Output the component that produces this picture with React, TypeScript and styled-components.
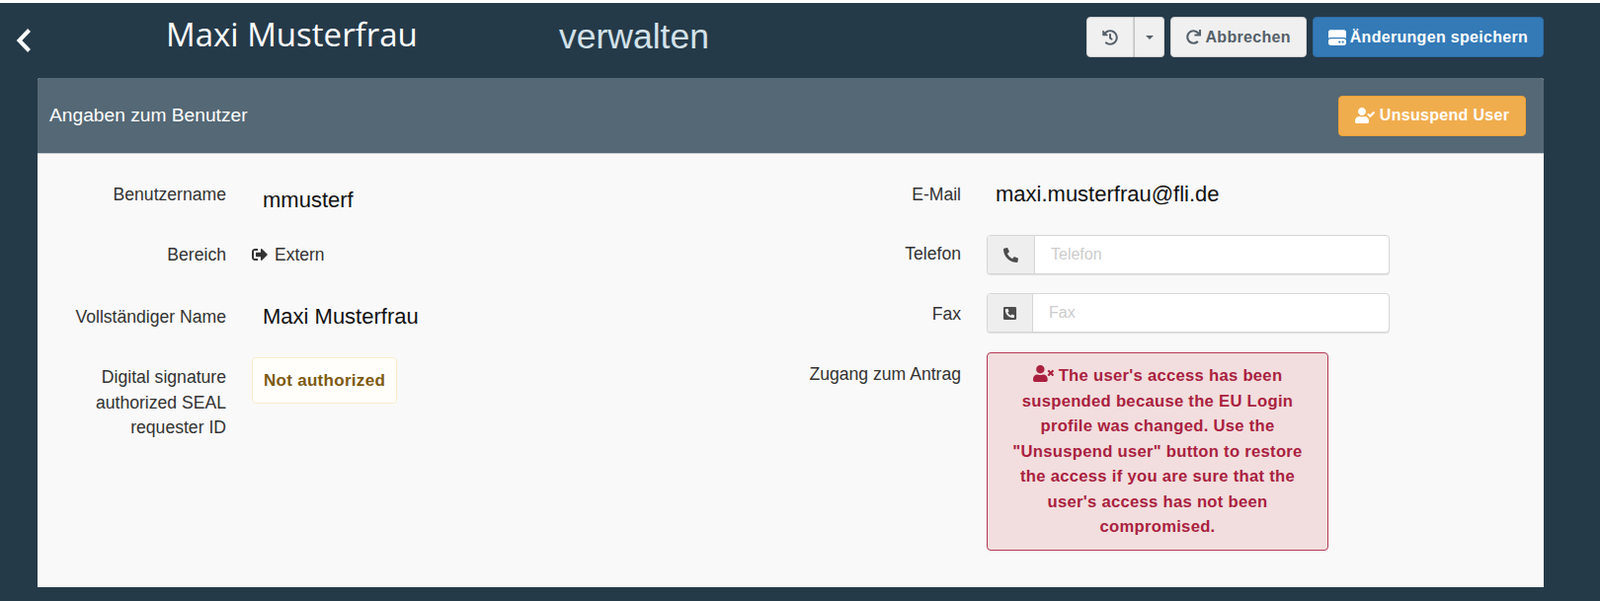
import React from "react"
import styled, { createGlobalStyle } from "styled-components"
import {
  FaHistory,
  FaPhoneAlt,
  FaPhoneSquareAlt,
  FaRedo,
  FaSignOutAlt,
  FaUserCheck,
  FaUserTimes,
} from "react-icons/fa"
import { FaHardDrive } from "react-icons/fa6"

const GlobalStyle = createGlobalStyle`
  html, body {
    margin: 0;
    background: #253a49;
    font-family: "Liberation Sans", Arial, sans-serif;
  }
`

const Page = styled.div`
  width: 1620px;
  height: 609px;
  overflow: hidden;
  border-top: 3px solid #ffffff;
  box-sizing: border-box;
  background: #253a49;
`

const TopBar = styled.div`
  height: 76px;
  display: flex;
  align-items: flex-start;
  padding-right: 57px;
`

const BackLink = styled.a`
  width: 168px;
  padding: 25px 0 0 16px;
  box-sizing: border-box;
  flex: none;
  line-height: 0;
`

const UserName = styled.h1`
  margin: 11px 0 0;
  width: 398px;
  flex: none;
  font-family: "Open Sans", sans-serif;
  font-size: 33px;
  line-height: 42px;
  font-weight: 400;
  color: #ffffff;
`

const PageTitle = styled.span`
  margin-top: 13px;
  font-size: 35.5px;
  line-height: 42px;
  color: #d3e2ea;
`

const Actions = styled.div`
  margin-left: auto;
  margin-top: 14px;
  display: flex;
  gap: 6px;
`

const Button = styled.button<{ $variant?: "default" | "primary" | "warning" }>`
  height: 41px;
  display: inline-flex;
  align-items: center;
  justify-content: center;
  gap: 4px;
  padding: 0 15px;
  border-radius: 4px;
  font-family: inherit;
  font-size: 16px;
  font-weight: 700;
  letter-spacing: 0.3px;
  white-space: nowrap;
  border: 1px solid
    ${(p) =>
      p.$variant === "primary" ? "#2e6da4" : p.$variant === "warning" ? "#eea236" : "#d4d4d4"};
  background: ${(p) =>
    p.$variant === "primary" ? "#337ab7" : p.$variant === "warning" ? "#f0ad4e" : "#f0f0f0"};
  color: ${(p) => (p.$variant === "primary" || p.$variant === "warning" ? "#ffffff" : "#55606a")};
`

const SplitGroup = styled.div`
  display: flex;
  width: 79px;
`

const SplitMain = styled(Button)`
  width: 48px;
  padding: 0;
  border-radius: 4px 0 0 4px;
`

const SplitCaret = styled(Button)`
  width: 31px;
  padding: 0;
  border-left-color: #c4c4c4;
  border-radius: 0 4px 4px 0;
`

const Caret = styled.span`
  width: 0;
  height: 0;
  border-left: 4px solid transparent;
  border-right: 4px solid transparent;
  border-top: 4px solid #55606a;
`

const Panel = styled.section`
  margin: 0 57px 0 38px;
  height: 516px;
  border-radius: 3px 3px 0 0;
  overflow: hidden;
  background: #f9f9f9;
`

const PanelHeader = styled.header`
  height: 77px;
  box-sizing: border-box;
  display: flex;
  align-items: center;
  justify-content: space-between;
  padding: 0 18px 0 12px;
  background: #546875;
  border-bottom: 1px solid #c9ced2;
`

const PanelTitle = styled.h2`
  margin: 0;
  font-size: 19.2px;
  font-weight: 400;
  color: #ffffff;
`

const UnsuspendButton = styled(Button)`
  width: 190px;
  height: 41px;
  padding: 0;
  gap: 5px;
`

const PanelBody = styled.div`
  display: grid;
  grid-template-columns: 700px 1fr;
  padding-top: 21px;
`

const FormColumn = styled.div<{ $labelWidth: number }>`
  display: flex;
  flex-direction: column;
  gap: 19px;
  --label-width: ${(p) => p.$labelWidth}px;
`

const FormRow = styled.div<{ $height?: number }>`
  display: grid;
  grid-template-columns: var(--label-width) 1fr;
  column-gap: 26px;
  min-height: ${(p) => p.$height ?? 42}px;
`

const Label = styled.label<{ $top?: number }>`
  padding-top: ${(p) => p.$top ?? 8}px;
  text-align: right;
  font-size: 17.6px;
  line-height: 25.5px;
  color: #333333;
`

const PlainValue = styled.div<{ $offset?: number; $left?: number }>`
  padding: ${(p) => p.$offset ?? 14}px 0 0 ${(p) => p.$left ?? 11}px;
  font-size: 22px;
  line-height: 24px;
  color: #111111;
`

const AreaValue = styled.div`
  display: flex;
  align-items: center;
  gap: 7px;
  height: 40px;
  font-size: 17.5px;
  color: #333333;
`

const NotAuthorized = styled.div`
  width: 147px;
  height: 47px;
  box-sizing: border-box;
  display: flex;
  align-items: center;
  justify-content: center;
  border: 1px solid #faebcc;
  border-radius: 4px;
  background: #fffefb;
  color: #7d5a10;
  font-size: 17px;
  font-weight: 700;
  letter-spacing: 0.3px;
`

const InputGroup = styled.div<{ $addonWidth: number }>`
  width: 408px;
  height: 40px;
  display: grid;
  grid-template-columns: ${(p) => p.$addonWidth}px 1fr;
  box-sizing: border-box;
  border: 1px solid #d6d6d6;
  border-radius: 4px;
  box-shadow: 0 1px 1px rgba(0, 0, 0, 0.1);
  overflow: hidden;
  background: #ffffff;
`

const InputAddon = styled.span`
  display: flex;
  align-items: center;
  justify-content: center;
  background: #eeeeee;
  border-right: 1px solid #d6d6d6;
  color: #4d4d4d;
  font-size: 15px;
`

const Input = styled.input`
  border: 0;
  outline: 0;
  min-width: 0;
  padding: 0 16px;
  font-family: inherit;
  font-size: 16px;
  background: transparent;
  &::placeholder {
    color: #cccccc;
  }
`

const Alert = styled.div`
  width: 346px;
  height: 201px;
  box-sizing: border-box;
  padding: 10px 16px 0;
  border: 1px solid #b33a57;
  border-radius: 4px;
  background: #f2dede;
  color: #a9213f;
  text-align: center;
  font-size: 16.6px;
  font-weight: 700;
  line-height: 25.5px;
  letter-spacing: 0.3px;
`

const AlertIcon = styled(FaUserTimes)`
  font-size: 21px;
  vertical-align: -3px;
  margin-right: 5px;
`

export default function App() {
  return (
    <>
      <GlobalStyle />
      <Page>
        <TopBar>
          <BackLink>
            <svg width="16" height="26" viewBox="0 0 16 26" fill="none">
              <path d="M13.5 2.5 3.5 13l10 10.5" stroke="#fff" strokeWidth="4" />
            </svg>
          </BackLink>
          <UserName>Maxi Musterfrau</UserName>
          <PageTitle>verwalten</PageTitle>
          <Actions>
            <SplitGroup>
              <SplitMain><FaHistory /></SplitMain>
              <SplitCaret><Caret /></SplitCaret>
            </SplitGroup>
            <Button><FaRedo size={15} /> Abbrechen</Button>
            <Button $variant="primary"><FaHardDrive size={18} /> Änderungen speichern</Button>
          </Actions>
        </TopBar>
        <Panel>
          <PanelHeader>
            <PanelTitle>Angaben zum Benutzer</PanelTitle>
            <UnsuspendButton $variant="warning"><FaUserCheck size={20} /> Unsuspend User</UnsuspendButton>
          </PanelHeader>
          <PanelBody>
            <FormColumn $labelWidth={191}>
              <FormRow>
                <Label>Benutzername</Label>
                <PlainValue>mmusterf</PlainValue>
              </FormRow>
              <FormRow $height={44}>
                <Label>Bereich</Label>
                <AreaValue><FaSignOutAlt size={16} /> Extern</AreaValue>
              </FormRow>
              <FormRow>
                <Label>Vollständiger Name</Label>
                <PlainValue $offset={8}>Maxi Musterfrau</PlainValue>
              </FormRow>
              <FormRow>
                <Label>Digital signature authorized SEAL requester ID</Label>
                <NotAuthorized>Not authorized</NotAuthorized>
              </FormRow>
            </FormColumn>
            <FormColumn $labelWidth={235}>
              <FormRow>
                <Label>E-Mail</Label>
                <PlainValue $offset={8} $left={9}>maxi.musterfrau@fli.de</PlainValue>
              </FormRow>
              <FormRow $height={40}>
                <Label $top={7}>Telefon</Label>
                <InputGroup $addonWidth={48}>
                  <InputAddon><FaPhoneAlt /></InputAddon>
                  <Input placeholder="Telefon" />
                </InputGroup>
              </FormRow>
              <FormRow $height={41}>
                <Label $top={9}>Fax</Label>
                <InputGroup $addonWidth={46}>
                  <InputAddon><FaPhoneSquareAlt /></InputAddon>
                  <Input placeholder="Fax" />
                </InputGroup>
              </FormRow>
              <FormRow>
                <Label $top={10}>Zugang zum Antrag</Label>
                <Alert>
                  <AlertIcon />
                  The user's access has been suspended because the EU Login profile was changed. Use the "Unsuspend user" button to restore the access if you are sure that the user's access has not been compromised.
                </Alert>
              </FormRow>
            </FormColumn>
          </PanelBody>
        </Panel>
      </Page>
    </>
  )
}
